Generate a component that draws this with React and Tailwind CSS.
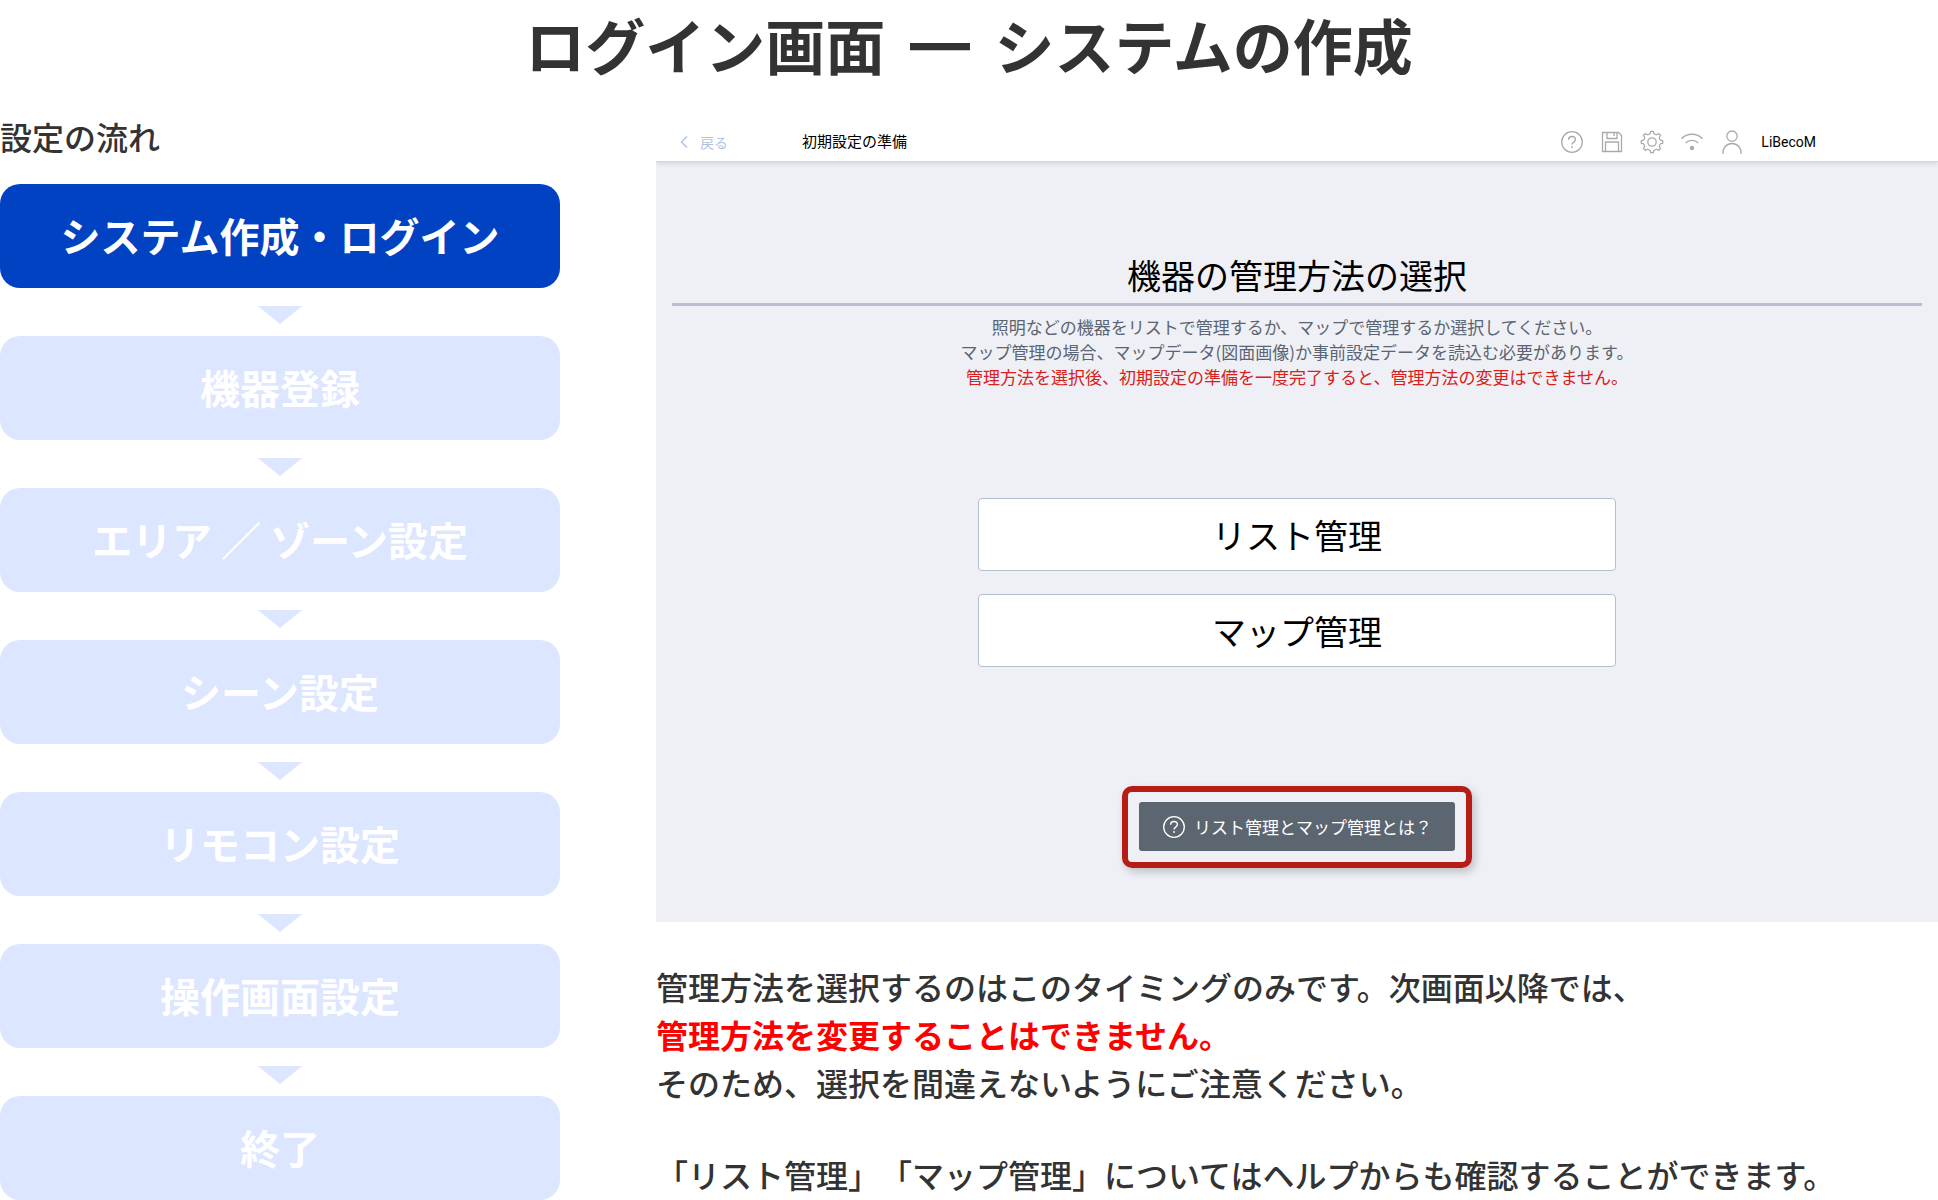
import React from 'react';
import clsx from 'clsx';

const steps = [
  'システム作成・ログイン',
  '機器登録',
  'エリア ／ ゾーン設定',
  'シーン設定',
  'リモコン設定',
  '操作画面設定',
  '終了',
];

const HelpIcon = ({ className }) => (
  <svg viewBox="0 0 24 24" fill="none" stroke="currentColor" className={className} aria-hidden="true">
    <circle cx="12" cy="12" r="10.3" strokeWidth="1.3" />
    <path d="M8.6 9.8c0-2 1.4-3.3 3.4-3.3s3.4 1.3 3.4 3.1c0 2.600-3.400 2.500-3.400 5" strokeWidth="1.4" />
    <circle cx="12" cy="17" r="0.9" fill="currentColor" stroke="none" />
  </svg>
);

const SaveIcon = () => (
  <svg viewBox="0 0 24 24" fill="none" stroke="currentColor" strokeWidth="1.3" className="size-6" aria-hidden="true">
    <path d="M2.500 2.500h16l3 3v16h-19z" />
    <path d="M7 2.500v6h10v-6M14 3v3" />
    <path d="M5.500 21.500v-9.500h13v9.500" />
  </svg>
);

// Eight-toothed cog, one tooth rotated around the centre
const GearIcon = () => (
  <svg viewBox="0 0 24 24" fill="none" stroke="currentColor" strokeWidth="1.3" className="size-6" aria-hidden="true">
    <circle cx="12" cy="12" r="4.200" />
    {[0, 45, 90, 135, 180, 225, 270, 315].map((angle) => (
      <path
        key={angle}
        d="M8.700 4.100Q10 4.200 10.300 3L10.700 1.300h2.600L13.700 3Q14 4.200 15.300 4.100"
        transform={`rotate(${angle} 12 12)`}
      />
    ))}
  </svg>
);

const WifiIcon = () => (
  <svg viewBox="0 0 24 24" fill="none" stroke="currentColor" strokeWidth="1.4" className="size-6" aria-hidden="true">
    <path d="M1.500 8.800C7 2.800 17 2.800 22.500 8.800" />
    <path d="M5.800 13c3.300-3.500 9.100-3.500 12.400 0" />
    <circle cx="12" cy="18" r="2.200" fill="currentColor" stroke="none" />
  </svg>
);

const UserIcon = () => (
  <svg viewBox="0 0 24 24" fill="none" stroke="currentColor" strokeWidth="1.3" className="size-6" aria-hidden="true">
    <circle cx="12" cy="6.200" r="5.200" />
    <path d="M2.800 24c0-6.500 4-10.500 9.200-10.500s9.200 4 9.200 10.500" />
  </svg>
);

const toolbar = [
  { label: 'ヘルプ', icon: <HelpIcon className="size-6" /> },
  { label: '保存', icon: <SaveIcon /> },
  { label: '設定', icon: <GearIcon /> },
  { label: '通信', icon: <WifiIcon /> },
  { label: 'ユーザー', icon: <UserIcon /> },
];

const StepFlow = () => (
  <aside className="w-[560px] shrink-0">
    <h2 className="text-[32px] leading-11 font-medium mb-[26px]">設定の流れ</h2>
    <ol>
      {steps.map((step, idx) => (
        <li key={step}>
          {idx > 0 && (
            <div className="h-12 pt-[18px] flex justify-center">
              <svg viewBox="0 0 44 18" className="w-11 h-[18px] text-[#dde6ff]" fill="currentColor" aria-hidden="true">
                <path d="M0 0h44L22 18z" />
              </svg>
            </div>
          )}
          <div
            className={clsx(
              'h-[104px] pb-0.5 rounded-[20px] flex items-center justify-center text-[40px] font-bold text-white',
              idx === 0 ? 'bg-[#0042c2]' : 'bg-[#dde6ff]'
            )}
          >
            {step}
          </div>
        </li>
      ))}
    </ol>
  </aside>
);

const AppScreen = () => (
  <section className="bg-[#eff0f5] text-black pb-[54px] overflow-hidden">
    {/* Top bar */}
    <header className="h-10 bg-white border-b border-[#d5d6dc] shadow-[0_2px_5px_rgba(0,0,0,0.1)] flex items-center pl-6 pr-[122px]">
      <button className="flex items-center gap-3 text-sm text-[#b0c3e4]">
        <svg viewBox="0 0 8 12" className="w-2 h-3" fill="none" stroke="currentColor" strokeWidth="1.5" aria-hidden="true">
          <path d="M7 0.500L1.500 6L7 11.500" />
        </svg>
        戻る
      </button>
      <h2 className="ml-[74px] text-[15px]">初期設定の準備</h2>
      <div className="ml-auto flex items-center gap-4 text-[#aaaaaa]">
        {toolbar.map((item) => (
          <button key={item.label} aria-label={item.label}>
            {item.icon}
          </button>
        ))}
        <span className="ml-px font-[Roboto,sans-serif] text-sm text-black">LiBecoM</span>
      </div>
    </header>

    <div className="px-4 pt-[87px] text-center">
      <h3 className="text-[34px] leading-[52px] pb-0.5 border-b-3 border-[#b9bed0]">機器の管理方法の選択</h3>
      <p className="mt-2 text-[17px] leading-[25px] text-[#5b6472]">
        照明などの機器をリストで管理するか、マップで管理するか選択してください。
        <br />
        マップ管理の場合、マップデータ(図面画像)か事前設定データを読込む必要があります。
        <br />
        <span className="text-[#d9201a]">管理方法を選択後、初期設定の準備を一度完了すると、管理方法の変更はできません。</span>
      </p>
    </div>

    <div className="mt-[109px] flex flex-col items-center gap-[23px]">
      {['リスト管理', 'マップ管理'].map((label) => (
        <button key={label} className="w-[638px] h-[73px] bg-white border border-[#b3c0cd] rounded-[4px] text-[34px]">
          {label}
        </button>
      ))}
    </div>

    <div className="mt-[119px] flex justify-center">
      <div className="p-[11px] pt-[10px] border-6 border-[#b61d16] rounded-[10px] shadow-[3px_4px_8px_rgba(0,0,0,0.2)]">
        <button className="h-[49px] w-[316px] flex items-center justify-center gap-2 bg-[#5c6670] rounded-[3px] text-[17px] text-white">
          <HelpIcon className="size-6" />
          リスト管理とマップ管理とは？
        </button>
      </div>
    </div>
  </section>
);

export default function App() {
  return (
    <main
      className="bg-white text-[#333333] font-['Noto_Sans_CJK_JP',sans-serif] [text-spacing-trim:space-all]"
      lang="ja"
    >
      <h1 className="h-[97px] text-center text-[60px] leading-[88px] font-bold">
        ログイン画面<span className="mx-[11px]"> ━ </span>システムの作成
      </h1>
      <div className="flex gap-24 pt-[17px]">
        <StepFlow />
        <div className="flex-1 min-w-0 pt-2">
          <AppScreen />
          <div className="mt-10 text-[32px] leading-12 font-medium">
            <p>
              管理方法を選択するのはこのタイミングのみです。次画面以降では、
              <br />
              <strong className="font-bold text-[#ff0000]">管理方法を変更することはできません。</strong>
              <br />
              そのため、選択を間違えないようにご注意ください。
            </p>
            <p className="mt-11">「リスト管理」「マップ管理」についてはヘルプからも確認することができます。</p>
          </div>
        </div>
      </div>
    </main>
  );
}
